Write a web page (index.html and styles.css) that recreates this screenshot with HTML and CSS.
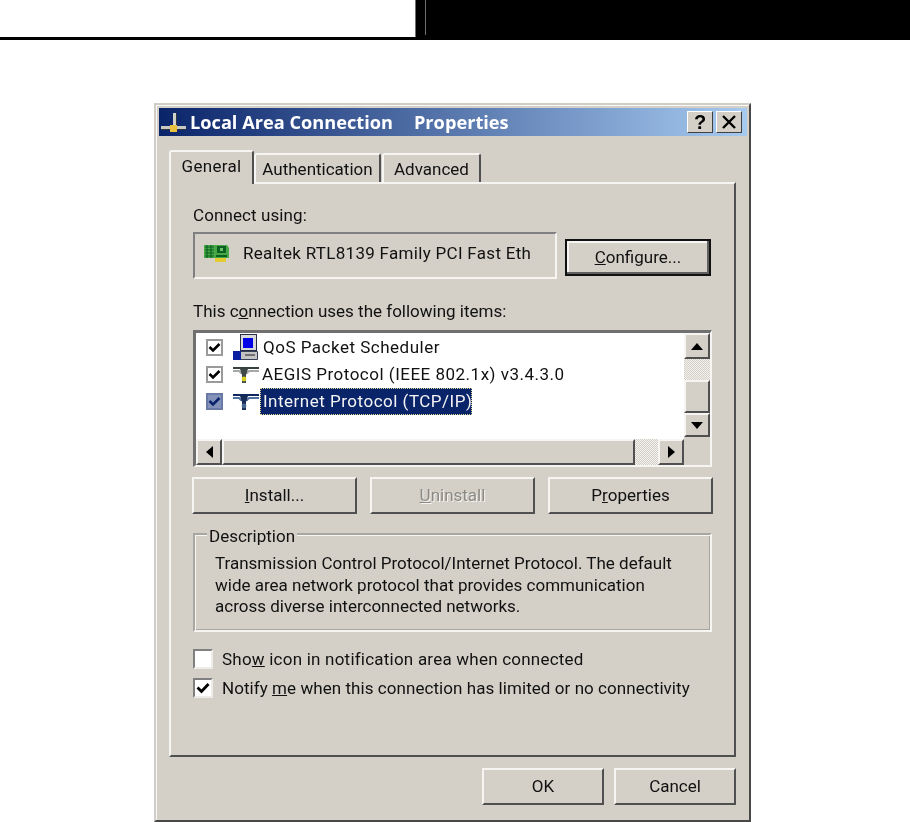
FILE: index.html
```html
<!DOCTYPE html>
<html lang="en">

<head>
    <meta charset="UTF-8">
    <meta name="viewport" content="width=device-width, initial-scale=1.0">
    <title>Local Area Connection Properties</title>
    <link rel="stylesheet" href="styles.css">
</head>

<body>
    <header class="page_head">
        <div class="head_left"></div>
        <div class="head_right"></div>
    </header>

    <section class="dialog">
        <div class="titlebar">
            <svg class="title_icon" width="28" height="24" viewBox="0 0 28 24">
                <rect x="13" y="3" width="3" height="13" fill="#d0d0c8" />
                <rect x="16" y="3" width="1" height="13" fill="#303840" />
                <rect x="1" y="16" width="25" height="3" fill="#c8c8c0" />
                <rect x="1" y="19" width="25" height="1" fill="#303840" />
                <rect x="10" y="15" width="7" height="7" fill="#e8c040" />
            </svg>
            <span class="title_text">Local Area Connection</span>
            <span class="title_text title_second">Properties</span>
            <div class="title_buttons">
                <button class="title_btn">?</button>
                <button class="title_btn">
                    <svg width="16" height="14" viewBox="0 0 16 14">
                        <path d="M2 1 L14 13 M14 1 L2 13" stroke="#000" stroke-width="2.4" fill="none" />
                    </svg>
                </button>
            </div>
        </div>

        <div class="tabs">
            <div class="tab tab_active">General</div>
            <div class="tab tab_auth">Authentication</div>
            <div class="tab tab_adv">Advanced</div>
        </div>

        <div class="panel">
            <p class="label">Connect using:</p>
            <div class="connect_row">
                <div class="adapter_box">
                    <svg class="adapter_icon" width="26" height="18" viewBox="0 0 26 18">
                        <path d="M0 0 H23 L25 3 V13 H0 Z" fill="#48a848" />
                        <path d="M1 2 H10 M1 5 H10 M1 8 H10 M1 11 H10 M3 0 V13 M7 0 V13" stroke="#0c6020" stroke-width="1.1" />
                        <rect x="13" y="1" width="9" height="7" fill="#0c6020" />
                        <rect x="16" y="3" width="3" height="3" fill="#70c070" />
                        <rect x="12" y="10" width="11" height="2" fill="#0c6020" />
                        <rect x="11" y="13" width="11" height="4" fill="#e4cc30" />
                    </svg>
                    <span class="adapter_name">Realtek RTL8139 Family PCI Fast Eth</span>
                </div>
                <button class="btn btn_default btn_configure"><u>C</u>onfigure...</button>
            </div>

            <p class="label label_items">This c<u>o</u>nnection uses the following items:</p>
            <div class="listbox">
                <div class="list_items">
                    <div class="list_row">
                        <span class="check check_small">
                            <svg width="13" height="11" viewBox="0 0 13 11"><path d="M1.5 5 L5 8.5 L11.5 2" stroke="#000" stroke-width="2.6" fill="none" /></svg>
                        </span>
                        <svg class="item_icon" width="26" height="27" viewBox="0 0 26 27">
                            <rect x="7.5" y="0.5" width="16" height="16" fill="#d8d8d8" stroke="#283048" />
                            <rect x="10" y="4" width="10" height="10" fill="#0000e8" />
                            <path d="M5.5 17.5 H24.5 V25.5 H5.5 Z" fill="#c4c4c4" stroke="#384058" />
                            <rect x="12" y="20" width="10" height="2" fill="#707070" />
                            <rect x="0" y="17" width="8" height="9" fill="#0a20a0" />
                        </svg>
                        <span class="item_text">QoS Packet Scheduler</span>
                    </div>
                    <div class="list_row">
                        <span class="check check_small">
                            <svg width="13" height="11" viewBox="0 0 13 11"><path d="M1.5 5 L5 8.5 L11.5 2" stroke="#000" stroke-width="2.6" fill="none" /></svg>
                        </span>
                        <svg class="item_icon" width="26" height="26" viewBox="0 0 26 26">
                            <path d="M0 6 H26" stroke="#384040" stroke-width="2" />
                            <path d="M0 9 H6 L8 11 H14 L16 9 H26" stroke="#a8a8a8" stroke-width="2" fill="none" />
                            <path d="M7 7 H15 L13 13 V21 H9 V13 Z" fill="#404848" />
                            <circle cx="11" cy="17" r="2.4" fill="#d8d020" />
                        </svg>
                        <span class="item_text item_text_tight">AEGIS Protocol (IEEE 802.1x) v3.4.3.0</span>
                    </div>
                    <div class="list_row">
                        <span class="check check_small check_sel">
                            <svg width="13" height="11" viewBox="0 0 13 11"><path d="M1.5 5 L5 8.5 L11.5 2" stroke="#0a246a" stroke-width="2.6" fill="none" /></svg>
                        </span>
                        <svg class="item_icon" width="26" height="26" viewBox="0 0 26 26">
                            <path d="M0 6 H26" stroke="#102860" stroke-width="2" />
                            <path d="M0 9 H6 L8 11 H14 L16 9 H26" stroke="#5070a0" stroke-width="2" fill="none" />
                            <path d="M7 7 H15 L13 13 V21 H9 V13 Z" fill="#182c58" />
                            <circle cx="11" cy="17" r="2.4" fill="#4a6890" />
                        </svg>
                        <span class="item_text item_selected">Internet Protocol (TCP/IP)</span>
                    </div>
                </div>
                <div class="scroll_v">
                    <button class="scroll_btn"><span class="arrow arrow_up"></span></button>
                    <div class="scroll_track scroll_track_top"></div>
                    <div class="scroll_thumb scroll_thumb_v"></div>
                    <button class="scroll_btn scroll_btn_down"><span class="arrow arrow_down"></span></button>
                </div>
                <div class="scroll_h">
                    <button class="scroll_btn"><span class="arrow arrow_left"></span></button>
                    <div class="scroll_thumb scroll_thumb_h"></div>
                    <div class="scroll_track scroll_track_right"></div>
                    <button class="scroll_btn"><span class="arrow arrow_right"></span></button>
                </div>
            </div>

            <div class="item_buttons">
                <button class="btn btn_item"><u>I</u>nstall...</button>
                <button class="btn btn_item btn_disabled"><u>U</u>ninstall</button>
                <button class="btn btn_item">P<u>r</u>operties</button>
            </div>

            <div class="group">
                <span class="group_legend">Description</span>
                <p>Transmission Control Protocol/Internet Protocol. The default</p>
                <p>wide area network protocol that provides communication</p>
                <p>across diverse interconnected networks.</p>
            </div>

            <label class="option option_first">
                <span class="check"></span>
                <span>Sho<u>w</u> icon in notification area when connected</span>
            </label>
            <label class="option option_second">
                <span class="check">
                    <svg width="14" height="12" viewBox="0 0 14 12"><path d="M1.5 5.5 L5.5 9.5 L12.5 2" stroke="#000" stroke-width="2.8" fill="none" /></svg>
                </span>
                <span>Notify <u>m</u>e when this connection has limited or no connectivity</span>
            </label>
        </div>

        <div class="footer">
            <button class="btn btn_footer">OK</button>
            <button class="btn btn_footer">Cancel</button>
        </div>
    </section>
</body>

</html>
```

FILE: styles.css
```css
* {
    margin: 0;
    padding: 0;
    box-sizing: border-box;
}

body {
    width: 910px;
    height: 822px;
    overflow: hidden;
    background-color: #fff;
    font-family: "Roboto", "Liberation Sans", sans-serif;
    font-size: 17px;
    color: #111;
}

/* --------------------- Page head --------------------- */

.page_head {
    display: flex;
    height: 40px;
    border-bottom: 3px solid #000;
}

.head_left {
    width: 415px;
}

.head_right {
    flex: 1;
    background-color: #000;
    border-left: 1px solid #707070;
}

.head_right::before {
    content: "";
    display: block;
    width: 1px;
    height: 35px;
    margin-left: 9px;
    background-color: #707070;
}

/* --------------------- Dialog --------------------- */

.dialog {
    width: 597px;
    height: 719px;
    margin: 63px 0 0 154px;
    padding: 3px 2px 0 3px;
    background-color: #d4d0c8;
    border: 2px solid;
    border-color: #d0cdc6 #484848 #484848 #d0cdc6;
    box-shadow: inset 1px 1px 0 #f8f8f6;
    filter: blur(0.35px);
}

.titlebar {
    display: flex;
    align-items: center;
    height: 28px;
    background: linear-gradient(to right, #0a246a, #a6caf0);
}

.title_icon {
    margin-left: 1px;
    flex-shrink: 0;
}

.title_text {
    margin-left: 2px;
    font-family: "Open Sans", "Liberation Sans", sans-serif;
    font-weight: 700;
    font-size: 18.2px;
    color: #fff;
    white-space: nowrap;
}

.title_second {
    margin-left: 21px;
}

.title_buttons {
    display: flex;
    gap: 3px;
    margin-left: auto;
    margin-right: 5px;
}

.title_btn {
    width: 26px;
    height: 22px;
    display: flex;
    align-items: center;
    justify-content: center;
    font-family: "Liberation Sans", sans-serif;
    font-size: 20px;
    font-weight: 700;
    color: #000;
    background-color: #d4d0c8;
    border: 1px solid;
    border-color: #fff #404040 #404040 #fff;
}

/* --------------------- Tabs --------------------- */

.tabs {
    display: flex;
    align-items: flex-end;
    height: 32px;
    margin: 14px 0 0 10px;
}

.tab {
    display: flex;
    align-items: center;
    justify-content: center;
    height: 29px;
    background-color: #d4d0c8;
    border: 2px solid;
    border-color: #f6f5f2 #505050 transparent #f6f5f2;
    border-bottom: none;
    border-radius: 3px 3px 0 0;
}

.tab_active {
    width: 85px;
    height: 34px;
    padding-bottom: 4px;
    margin-bottom: -2px;
    z-index: 1;
    letter-spacing: 0.3px;
}

.tab_auth {
    width: 127px;
}

.tab_adv {
    width: 99px;
    margin-left: 1px;
}

/* --------------------- Panel --------------------- */

.panel {
    width: 567px;
    height: 575px;
    margin-left: 10px;
    padding: 20px 22px 0 22px;
    border: 2px solid;
    border-color: #f6f5f2 #505050 #505050 #f6f5f2;
}

.label {
    height: 22px;
    line-height: 22px;
    letter-spacing: 0.1px;
}

.connect_row {
    display: flex;
    margin-top: 6px;
}

.adapter_box {
    display: flex;
    align-items: flex-start;
    width: 364px;
    height: 47px;
    padding: 9px 0 0 9px;
    border: 2px solid;
    border-color: #808080 #f6f5f2 #f6f5f2 #808080;
    white-space: nowrap;
}

.adapter_icon {
    flex-shrink: 0;
    margin-top: 2px;
}

.adapter_name {
    margin-left: 13px;
    line-height: 20px;
    letter-spacing: 0.3px;
}

/* --------------------- Buttons --------------------- */

.btn {
    display: flex;
    align-items: center;
    justify-content: center;
    height: 37px;
    padding-bottom: 2px;
    font-family: inherit;
    font-size: 17px;
    color: #111;
    background-color: #d4d0c8;
    border: 2px solid;
    border-color: #f6f5f2 #505050 #505050 #f6f5f2;
}

.btn_default {
    border-color: #111;
    box-shadow: inset -2px -2px 0 #606060, inset 2px 2px 0 #f6f5f2;
}

.btn_configure {
    width: 146px;
    margin: 7px 0 0 8px;
}

.btn_disabled {
    color: #8c8a84;
    text-shadow: 1px 1px 0 #f6f5f2;
}

.item_buttons {
    display: flex;
    justify-content: space-between;
    width: 521px;
    margin: 10px 0 0 -1px;
}

.btn_item {
    width: 165px;
}

.btn_footer {
    width: 122px;
}

/* --------------------- Listbox --------------------- */

.label_items {
    margin-top: 21px;
    letter-spacing: 0;
}

.listbox {
    display: grid;
    grid-template-columns: 488px 26px;
    grid-template-rows: 106px 26px;
    width: 519px;
    height: 137px;
    margin-top: 8px;
    background-color: #d4d0c8;
    border: solid;
    border-width: 3px 2px 2px 3px;
    border-color: #707070 #f6f5f2 #f6f5f2 #707070;
}

.list_items {
    padding: 1px 0 0 10px;
    background-color: #fff;
}

.list_row {
    display: flex;
    align-items: center;
    height: 27px;
}

.check {
    display: flex;
    align-items: center;
    justify-content: center;
    flex-shrink: 0;
    width: 20px;
    height: 20px;
    background-color: #fff;
    border: 2px solid;
    border-color: #808080 #eeece8 #eeece8 #808080;
}

.check_small {
    width: 17px;
    height: 17px;
    border-color: #9a9a9a;
}

.check_sel {
    background-color: #8492ba;
    border-color: #6a7aa6;
}

.item_icon {
    flex-shrink: 0;
    margin-left: 10px;
}

.item_text {
    margin-left: 4px;
    white-space: nowrap;
    line-height: 27px;
    letter-spacing: 0.5px;
}

.item_text_tight {
    margin-left: 3px;
}

.item_selected {
    margin-left: 1px;
    padding: 0 3px;
    width: 212px;
    color: #f4f4f4;
    background-color: #0a246a;
    outline: 1px dotted #e0d890;
    outline-offset: -1px;
}

/* --------------------- Scrollbars --------------------- */

.scroll_v {
    display: flex;
    flex-direction: column;
}

.scroll_h {
    display: flex;
    grid-column: 1;
}

.scroll_btn {
    display: flex;
    align-items: center;
    justify-content: center;
    flex: 0 0 26px;
    width: 26px;
    height: 26px;
    background-color: #d4d0c8;
    border: 2px solid;
    border-color: #f6f5f2 #505050 #505050 #f6f5f2;
}

.scroll_btn_down {
    flex-basis: 24px;
    height: 24px;
}

.scroll_track {
    background-color: #e6e4df;
    background-image: repeating-conic-gradient(#d4d0c8 0 25%, #f2f1ee 0 50%);
    background-size: 2px 2px;
}

.scroll_track_top {
    height: 21px;
}

.scroll_track_right {
    flex: 0 0 23px;
}

.scroll_thumb {
    background-color: #d4d0c8;
    border: 2px solid;
    border-color: #f6f5f2 #505050 #505050 #f6f5f2;
}

.scroll_thumb_v {
    height: 33px;
}

.scroll_thumb_h {
    flex: 1;
}

.arrow {
    width: 0;
    height: 0;
    border: 6px solid transparent;
}

.arrow_up {
    border-top-width: 0;
    border-bottom: 7px solid #000;
}

.arrow_down {
    border-bottom-width: 0;
    border-top: 7px solid #000;
}

.arrow_left {
    border-left-width: 0;
    border-right: 7px solid #000;
}

.arrow_right {
    border-right-width: 0;
    border-left: 7px solid #000;
}

/* --------------------- Description --------------------- */

.group {
    position: relative;
    width: 519px;
    height: 99px;
    margin-top: 19px;
    padding: 18px 0 0 20px;
    line-height: 21.5px;
    border: 2px solid;
    border-color: #a8a6a0 #f6f5f2 #f6f5f2 #a8a6a0;
    box-shadow: inset 1px 1px 0 #f6f5f2, inset -1px -1px 0 #a8a6a0;
}

.group_legend {
    position: absolute;
    top: -9px;
    left: 12px;
    padding: 0 2px;
    line-height: 20px;
    background-color: #d4d0c8;
}

/* --------------------- Options --------------------- */

.option {
    display: flex;
    align-items: center;
    gap: 9px;
    height: 21px;
    margin-top: 16px;
    white-space: nowrap;
}

.option_first {
    letter-spacing: 0.22px;
}

.option_second {
    margin-top: 8px;
    letter-spacing: 0.06px;
}

/* --------------------- Footer --------------------- */

.footer {
    display: flex;
    justify-content: flex-end;
    gap: 10px;
    width: 577px;
    margin-top: 11px;
}
```
